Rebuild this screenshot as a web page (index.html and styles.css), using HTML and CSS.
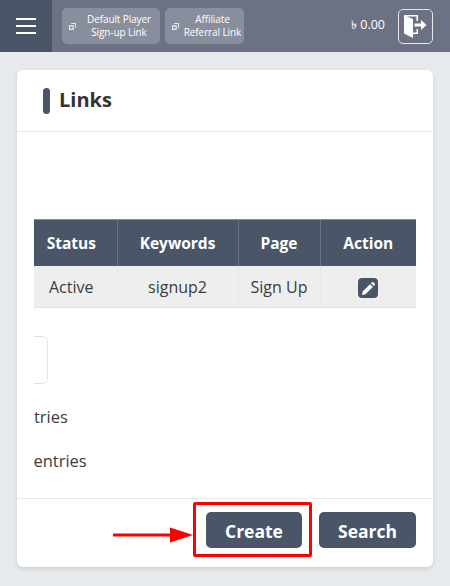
FILE: index.html
```html
<!DOCTYPE html>
<html lang="en">
<head>
    <meta charset="UTF-8">
    <meta name="viewport" content="width=device-width, initial-scale=1.0">
    <title>Links</title>
    <link rel="stylesheet" href="styles.css">
</head>
<body>
    <header class="topbar">
        <button class="burger" aria-label="Menu">
            <span></span><span></span><span></span>
        </button>
        <div class="quick-links">
            <a class="quick-link link-player" href="#">
                <svg class="copy-icon" viewBox="0 0 8 8"><rect x="0" y="2.500" width="5.500" height="5.500" fill="#e8e9ec"/><rect x="1.300" y="4" width="2.800" height="2.500" fill="#898e9d"/><path d="M2.500 0.500h5v5" fill="none" stroke="#fff" stroke-width="1"/></svg>
                <span>Default Player<br>Sign-up Link</span>
            </a>
            <a class="quick-link link-affiliate" href="#">
                <svg class="copy-icon" viewBox="0 0 8 8"><rect x="0" y="2.500" width="5.500" height="5.500" fill="#e8e9ec"/><rect x="1.300" y="4" width="2.800" height="2.500" fill="#898e9d"/><path d="M2.500 0.500h5v5" fill="none" stroke="#fff" stroke-width="1"/></svg>
                <span>Affiliate<br>Referral Link</span>
            </a>
        </div>
        <div class="balance"><span class="taka">৳</span> 0.00</div>
        <button class="logout" aria-label="Logout">
            <svg viewBox="0 0 23 23" width="23" height="23">
                <path d="M0 0L9 4V23L0 18.500z" fill="#fff"/>
                <path d="M0 0.750H13.250V6 M9 18.250H13.250V14" fill="none" stroke="#fff" stroke-width="1.500"/>
                <path d="M10.500 8.500H17V5L22.500 10 17 15V11.500H10.500z" fill="#fff"/>
            </svg>
        </button>
    </header>

    <main class="page">
        <section class="card">
            <div class="card-head">
                <span class="title-mark"></span>
                <h1>Links</h1>
            </div>

            <div class="card-body">
                <div class="table-wrap">
                    <table class="links-table">
                        <thead>
                            <tr>
                                <th class="col-status">Status</th>
                                <th class="col-keywords">Keywords</th>
                                <th class="col-page">Page</th>
                                <th class="col-action">Action</th>
                            </tr>
                        </thead>
                        <tbody>
                            <tr>
                                <td>Active</td>
                                <td>signup2</td>
                                <td>Sign Up</td>
                                <td>
                                    <a class="edit-btn" href="#" aria-label="Edit">
                                        <svg viewBox="0 0 12 12" width="13" height="13"><path d="M0 12l0.600-3.200L7.400 2l2.600 2.600-6.800 6.800z M8.200 1.200l1-1a1 1 0 0 1 1.300 0l1.300 1.300a1 1 0 0 1 0 1.300l-1 1z" fill="#fff"/></svg>
                                    </a>
                                </td>
                            </tr>
                        </tbody>
                    </table>
                </div>

                <div class="clip-row">
                    <div class="search-box"></div>
                </div>
                <div class="clip-row info-row info-first"><span class="info-one">Showing 10 entries</span></div>
                <div class="clip-row info-row"><span class="info-two">Showing 1 to 1 of 1 entries</span></div>
            </div>

            <div class="card-foot">
                <button class="btn btn-create">Create</button>
                <button class="btn">Search</button>
            </div>
        </section>
    </main>

    <!-- annotation drawn over the screenshot -->
    <div class="mark-box"></div>
    <svg class="mark-arrow" viewBox="0 0 80 16" width="80" height="16">
        <path d="M1 8H58" stroke="#f00" stroke-width="3" stroke-linecap="round"/>
        <path d="M57 0.500L80 8 57 15.500z" fill="#f00"/>
    </svg>
</body>
</html>
```

FILE: styles.css
```css
/* page */
body {
    font-family: "Open Sans", "Noto Sans", sans-serif;
    background-color: #e7eaed;
    margin: 0;
    padding: 0;
    color: #3c3c3c;
    height: 586px;
    overflow: hidden;
    position: relative;
}

/* top bar */
.topbar {
    display: flex;
    align-items: center;
    height: 52px;
    background-color: #6c7284;
}

.burger {
    display: flex;
    flex-direction: column;
    justify-content: center;
    align-items: center;
    gap: 5px;
    width: 52px;
    height: 52px;
    padding: 0;
    border: none;
    background-color: #4a5568;
}

.burger span {
    display: block;
    width: 20px;
    height: 2px;
    background-color: #fff;
}

.quick-links {
    display: flex;
    gap: 5px;
    margin-left: 10px;
}

.quick-link {
    display: flex;
    align-items: center;
    box-sizing: border-box;
    height: 36px;
    padding: 0 2px 0 7px;
    background-color: #898e9d;
    border-radius: 5px;
    color: #fff;
    font-size: 10px;
    letter-spacing: -0.1px;
    line-height: 13px;
    text-align: center;
    white-space: nowrap;
    text-decoration: none;
}

.quick-link span {
    flex: 1;
}

.copy-icon {
    width: 7px;
    height: 7px;
    margin-right: 4px;
}

.link-player {
    width: 98px;
}

.link-affiliate {
    width: 79px;
}

.balance {
    margin-left: auto;
    color: #fff;
    font-size: 12.500px;
}

.taka {
    font-size: 12px;
}

.logout {
    display: flex;
    align-items: center;
    justify-content: center;
    width: 35px;
    height: 35px;
    margin: 0 17px 0 13px;
    padding: 0;
    background: none;
    border: 1px solid #e6e7ea;
    border-radius: 5px;
}

/* card */
.page {
    padding: 18px 17px 0;
}

.card {
    height: 497px;
    background-color: #fff;
    border-radius: 6px;
    box-shadow: 0 2px 4px rgba(0, 0, 0, 0.12);
    display: flex;
    flex-direction: column;
}

.card-head {
    display: flex;
    align-items: center;
    gap: 9px;
    height: 61px;
    padding-left: 26px;
    border-bottom: 1px solid #e8e8e8;
}

.title-mark {
    width: 7px;
    height: 26px;
    border-radius: 4px;
    background-color: #4a5568;
}

h1 {
    margin: 0 0 2px;
    font-size: 20px;
    font-weight: 700;
    color: #333;
}

.card-body {
    flex: 1;
    padding: 87px 17px 0;
}

/* table */
.table-wrap {
    overflow: hidden;
}

.links-table {
    width: 100%;
    border-collapse: collapse;
    table-layout: fixed;
}

.links-table th {
    height: 46px;
    padding: 0;
    background-color: #4a5568;
    color: #fff;
    font-size: 15.500px;
    font-weight: 700;
    border-left: 1px solid #6c7284;
    border-top: 1px solid #868b99;
    box-sizing: border-box;
}

.links-table td {
    height: 42px;
    padding: 1px 0 0;
    background-color: #eeeeee;
    text-align: center;
    font-size: 16px;
    border-left: 1px solid #e9e9e9;
    border-bottom: 1px solid #e2e2e2;
    box-sizing: border-box;
}

.links-table th:first-child,
.links-table td:first-child {
    border-left: none;
    padding-right: 8px;
}

.col-status { width: 83px; }
.col-keywords { width: 121px; }
.col-page { width: 82px; }

.edit-btn {
    display: inline-flex;
    align-items: center;
    justify-content: center;
    width: 20px;
    height: 20px;
    vertical-align: middle;
    background-color: #4a5568;
    border-radius: 4px;
}

/* cropped leftovers of the scrolled table page */
.clip-row {
    overflow: hidden;
    white-space: nowrap;
}

.search-box {
    width: 100px;
    height: 48px;
    margin: 28px 0 0 -86px;
    box-sizing: border-box;
    border: 1px solid #e3e3e3;
    border-radius: 6px;
}

.info-row {
    height: 44px;
    line-height: 44px;
    font-size: 16.500px;
}

.info-first {
    margin-top: 11px;
}

.info-one {
    display: inline-block;
    margin-left: -112px;
}

.info-two {
    display: inline-block;
    margin-left: -151px;
}

/* footer */
.card-foot {
    display: flex;
    justify-content: flex-end;
    gap: 17px;
    height: 69px;
    padding: 13px 17px 0;
    border-top: 1px solid #e8e8e8;
    box-sizing: border-box;
}

.btn {
    width: 97px;
    height: 36px;
    padding: 1px 0 0;
    border: none;
    border-radius: 5px;
    background-color: #4a5568;
    color: #fff;
    font-family: inherit;
    font-size: 17.500px;
    font-weight: 700;
}

.btn-create {
    width: 96px;
}

/* red annotation */
.mark-box {
    position: absolute;
    left: 193px;
    top: 502px;
    width: 119px;
    height: 55px;
    box-sizing: border-box;
    border: 3px solid #f00;
    border-radius: 2px;
}

.mark-arrow {
    position: absolute;
    left: 113px;
    top: 527px;
}
```
